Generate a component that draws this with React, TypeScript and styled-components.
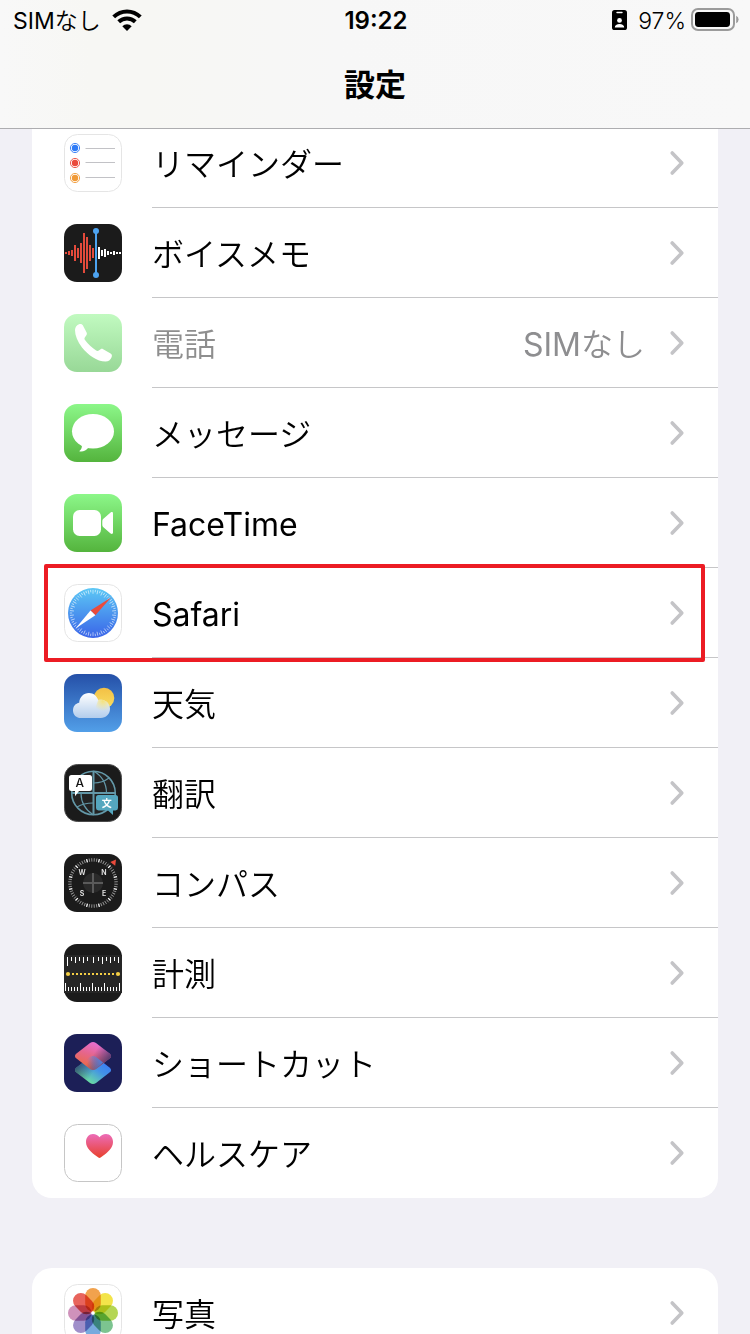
import React from 'react';
import styled, { createGlobalStyle } from 'styled-components';

const GlobalStyle = createGlobalStyle`
  *, *::before, *::after { box-sizing: border-box; }
  body {
    margin: 0;
    background: #f1f0f6;
    color: #000;
    font-family: Inter, "Noto Sans CJK JP", sans-serif;
  }
`;

const Screen = styled.div`
  display: flex;
  flex-direction: column;
  height: 100vh;
  overflow: hidden;
`;

const Header = styled.header`
  position: relative;
  z-index: 1;
  flex: none;
  background: linear-gradient(90deg, #f8f8f8 0%, #f7f7f4 12%, #f7f7f4 20%, #f7f7f7 45%, #f8f8f8 100%);
  border-bottom: 1px solid #adadb0;
`;

const StatusBar = styled.div`
  display: grid;
  grid-template-columns: 1fr auto 1fr;
  align-items: center;
  height: 42px;
  padding: 0 11px 0 13px;
  font-size: 23px;
  line-height: 42px;
`;

const StatusSide = styled.div<{ $end?: boolean }>`
  display: flex;
  align-items: center;
  justify-content: ${(p) => (p.$end ? 'flex-end' : 'flex-start')};
  gap: 11px;
`;

const Carrier = styled.span`
  font-weight: 350;
`;

const Latin = styled.span`
  font-weight: 400;
`;

const Clock = styled.time`
  font-size: 24px;
  font-weight: 600;
`;

const BatteryGroup = styled.div`
  display: flex;
  align-items: center;
  gap: 5px;
  font-weight: 350;
`;

const Title = styled.h1`
  margin: 0;
  height: 86px;
  font-size: 31px;
  font-weight: 700;
  line-height: 86px;
  text-align: center;
`;

const Content = styled.main`
  flex: 1;
  min-height: 0;
  overflow-y: auto;
  scrollbar-width: none;
  padding: 0 32px;
`;

const Groups = styled.div`
  display: flex;
  flex-direction: column;
  gap: 70px;
  margin-top: -11px;
`;

const Group = styled.ul<{ $continued: boolean }>`
  flex: none;
  margin: 0;
  padding: 0;
  list-style: none;
  background: #fff;
  border-radius: ${(p) => (p.$continued ? '0 0 20px 20px' : '20px')};
`;

const Item = styled.li`
  position: relative;
`;

const RowLink = styled.a`
  display: flex;
  align-items: center;
  gap: 30px;
  padding-left: 32px;
  color: inherit;
  text-decoration: none;
`;

const RowBody = styled.span<{ $last: boolean; $dim: boolean }>`
  flex: 1;
  display: flex;
  align-items: center;
  gap: 24px;
  height: 90px;
  padding-right: 33px;
  border-bottom: 1px solid ${(p) => (p.$last ? 'transparent' : '#c6c6c8')};
  color: ${(p) => (p.$dim ? '#8e8e8e' : '#000')};
  font-size: 32px;
  font-weight: 350;
  line-height: 40px;
`;

const Label = styled.span`
  flex: 1;
  padding-top: 4px;
`;

const Value = styled.span`
  padding-top: 4px;
  color: #8e8e90;
`;

const Highlight = styled.div`
  position: absolute;
  z-index: 1;
  inset: -4px 13px -4px 12px;
  border: 4px solid #ec1c24;
  border-radius: 2px;
  pointer-events: none;
`;

const IconSvg = styled.svg`
  flex: none;
  display: block;
  width: 58px;
  height: 58px;
`;

const StatusSvg = styled.svg`
  flex: none;
  display: block;
`;

const Tile = ({ fill, border }: { fill: string; border?: string }) =>
  border ? (
    <rect x="0.5" y="0.5" width="57" height="57" rx="13" fill={fill} stroke={border} />
  ) : (
    <rect width="58" height="58" rx="13" fill={fill} />
  );

const Fade = ({ id, stops }: { id: string; stops: string[] }) => (
  <linearGradient id={id} x1="0" y1="0" x2="0" y2="1">
    {stops.map((c, i) => (
      <stop key={i} offset={i / (stops.length - 1)} stopColor={c} />
    ))}
  </linearGradient>
);

const RemindersIcon = () => (
  <IconSvg viewBox="0 0 58 58" aria-hidden="true">
    <Tile fill="#fff" border="#e5e5e5" />
    {['#2f7bf6', '#ea4b3c', '#f09a37'].map((c, i) => (
      <g key={c}>
        <circle cx="11" cy={14 + i * 15} r="4.6" fill="none" stroke={c} strokeWidth="0.9" />
        <circle cx="11" cy={14 + i * 15} r="3.2" fill={c} />
        <path d={`M21.5 ${[14.5, 28.5, 43.5][i]}H51`} stroke="#c2c2c6" />
      </g>
    ))}
  </IconSvg>
);

const redBars = [2, 4, 6, 16, 10, 20, 40, 32, 16, 10];
const whiteBars = [12, 6, 8, 4, 2, 4, 2, 2];

const VoiceMemosIcon = () => (
  <IconSvg viewBox="0 0 58 58" aria-hidden="true">
    <Tile fill="#1b1b1b" />
    {redBars.map((h, i) => (
      <rect key={i} x={1 + i * 3} y={29 - h / 2} width="2" height={h} fill="#e34a3b" />
    ))}
    {whiteBars.map((h, i) => (
      <rect key={i} x={34 + i * 3} y={29 - h / 2} width="2" height={h} fill="#fff" />
    ))}
    <path d="M32 7V51" stroke="#4da3f0" strokeWidth="2" />
    <circle cx="32" cy="7" r="3" fill="#4da3f0" />
    <circle cx="32" cy="51" r="3" fill="#4da3f0" />
  </IconSvg>
);

const PhoneIcon = () => (
  <IconSvg viewBox="0 0 58 58" aria-hidden="true">
    <defs><Fade id="phone" stops={['#c1fac0', '#98d897']} /></defs>
    <Tile fill="url(#phone)" />
    <path
      fill="#fff"
      d="M11 16C11 13 13 11 15 10.3C16.5 9.7 18 10 18.8 11.2L22.6 18.5C23.2 20 22.8 20.8 22 21.8L20.8 23.5C20.2 24.5 20.5 25.3 21 26C24 30 28 33.8 32.2 36.6C33 37.2 34 37.2 34.8 36.6L36.6 35.2C37.4 34.7 38.3 34.7 39.2 35.2L46.6 39.6C48 40.5 48.2 41.8 47.6 43.2C46.5 46 44.5 47.6 41.5 47.6C33 47.6 24 41 18 33.5C13.5 27.5 11 21.5 11 16Z"
    />
  </IconSvg>
);

const MessagesIcon = () => (
  <IconSvg viewBox="0 0 58 58" aria-hidden="true">
    <defs><Fade id="messages" stops={['#8cf789', '#54b43d']} /></defs>
    <Tile fill="url(#messages)" />
    <ellipse cx="29" cy="27.3" rx="21" ry="17.3" fill="#fff" />
    <path d="M17.5 40C18.6 42.5 17.5 45.5 15.2 47.3C18.6 48.3 22 46.6 24.5 43.5Z" fill="#fff" />
  </IconSvg>
);

const FaceTimeIcon = () => (
  <IconSvg viewBox="0 0 58 58" aria-hidden="true">
    <defs><Fade id="facetime" stops={['#8cf789', '#54b43d']} /></defs>
    <Tile fill="url(#facetime)" />
    <rect x="9" y="16" width="28" height="26" rx="6.5" fill="#fff" />
    <path d="M38.3 27C38.3 26 38.7 25.3 39.4 24.7L46.6 18.5C47.8 17.6 49 18 49 19.4V38.6C49 40 47.8 40.4 46.6 39.5L39.4 33.3C38.7 32.7 38.3 32 38.3 31Z" fill="#fff" />
  </IconSvg>
);

const SafariIcon = () => (
  <IconSvg viewBox="0 0 58 58" aria-hidden="true">
    <defs><Fade id="safari" stops={['#5cc8f5', '#3a64e8']} /></defs>
    <Tile fill="#fff" border="#e5e5e5" />
    <circle cx="29" cy="29" r="25" fill="url(#safari)" />
    {Array.from({ length: 60 }, (_, i) => (
      <path
        key={i}
        d={i % 2 ? 'M29 5.8V8.2' : 'M29 5.8V9.8'}
        stroke="#fff"
        strokeOpacity="0.8"
        strokeWidth="0.7"
        transform={`rotate(${i * 6} 29 29)`}
      />
    ))}
    <path d="M47 13.4L26.5 26.6L31.4 31.2Z" fill="#ea4b3c" />
    <path d="M11.5 44.5L26.5 26.6L31.4 31.2Z" fill="#fff" />
  </IconSvg>
);

const WeatherIcon = () => (
  <IconSvg viewBox="0 0 58 58" aria-hidden="true">
    <defs>
      <Fade id="sky" stops={['#2550a8', '#529fe8']} />
      <Fade id="sun" stops={['#f3bf45', '#f8df62']} />
      <linearGradient id="cloud" gradientUnits="userSpaceOnUse" x1="0" y1="19" x2="0" y2="44">
        <stop offset="0" stopColor="#fff" />
        <stop offset="1" stopColor="#b3cdec" />
      </linearGradient>
      <radialGradient id="glow" gradientUnits="userSpaceOnUse" cx="39" cy="27" r="10">
        <stop offset="0" stopColor="#f4e27c" />
        <stop offset="1" stopColor="#f4e27c" stopOpacity="0" />
      </radialGradient>
    </defs>
    <Tile fill="url(#sky)" />
    <circle cx="40" cy="24" r="10.3" fill="url(#sun)" />
    <path fill="url(#cloud)" d="M17 44C12.3 44 9 40.6 9 36.4C9 32.4 11.7 29.4 15.2 28.8C15.6 23 19.6 19 25 19C29.4 19 32.8 21.8 34.2 26C35.2 25.6 36.3 25.6 37.4 25.8C42.3 26.2 46 30 46 34.8C46 40 42 44 36.8 44Z" />
    <path fill="url(#glow)" d="M34.2 26C35.2 25.6 36.3 25.6 37.4 25.8C42.3 26.2 46 30 46 34.8L40 38H30Z" />
  </IconSvg>
);

const TranslateIcon = () => (
  <IconSvg viewBox="0 0 58 58" aria-hidden="true">
    <Tile fill="#1b1b1b" border="#4a4a4a" />
    <g fill="none" stroke="#6398a8" strokeWidth="1.2">
      <circle cx="29.5" cy="29" r="21.8" fill="#232323" strokeWidth="1.6" />
      <path d="M29.5 7V51M8 29H52" strokeWidth="2" />
      <path d="M29.5 7C38 12 42.5 20 42.5 29M17 29C17 38 21.5 46 29.5 51" />
      <path d="M30 19C36 19 41 17 45 14M13 43C18 40 23 39 29 39" />
    </g>
    <path d="M7.5 11H25.5Q28 11 28 13.5V24.5Q28 27 25.5 27H15L11 32.3V27H7.5Q5 27 5 24.5V13.5Q5 11 7.5 11Z" fill="#fff" />
    <path d="M34.5 31H51.5Q54 31 54 33.5V44Q54 46.4 51.5 46.4H49V51L44 46.4H34.5Q32 46.4 32 44V33.5Q32 31 34.5 31Z" fill="#55a7bf" />
    <text x="15.8" y="23.4" fontSize="12" fontWeight="500" textAnchor="middle" fill="#111">A</text>
    <text x="42.8" y="42.6" fontSize="10" fontWeight="700" textAnchor="middle" fill="#fff">文</text>
  </IconSvg>
);

const CompassIcon = () => (
  <IconSvg viewBox="0 0 58 58" aria-hidden="true">
    <Tile fill="#1b1b1b" />
    {Array.from({ length: 60 }, (_, i) => (
      <path
        key={i}
        d="M29 4.2V7.6"
        stroke={i % 5 === 2 ? '#fff' : '#9a9a9a'}
        strokeWidth={i % 5 === 2 ? 1.3 : 0.9}
        transform={`rotate(${i * 6 + 3} 29 29)`}
      />
    ))}
    <circle cx="29" cy="29" r="10" fill="#2a2a2a" />
    <path d="M29 19V39M19 29H39" stroke="#5a5a5a" strokeWidth="2" />
    <path d="M52 5.5L46.3 8L51.2 11.8Z" fill="#ea4b3c" />
    <g fill="#e8e8e8" fontSize="7" fontWeight="600" textAnchor="middle">
      <text x="18" y="21.3">W</text>
      <text x="40" y="21.3">N</text>
      <text x="18" y="42.3">S</text>
      <text x="40" y="42.3">E</text>
    </g>
  </IconSvg>
);

const topTicks: [number, number][] = [
  [3.5, 9], [7.5, 4], [11.5, 6], [15.5, 4], [19.5, 6], [23.5, 4], [29.5, 6],
  [34.5, 4], [38.5, 7], [42.5, 4], [46.5, 6], [50.5, 4], [54.5, 6],
];

const MeasureIcon = () => (
  <IconSvg viewBox="0 0 58 58" aria-hidden="true">
    <Tile fill="#1b1b1b" />
    <rect y="11" width="58" height="38" fill="#262626" />
    {topTicks.map(([x, h]) => (
      <rect key={x} x={x - 0.5} y="13" width="1" height={h} fill="#fff" />
    ))}
    {Array.from({ length: 19 }, (_, i) => {
      const h = [0, 5, 9, 13, 18].includes(i) ? 8 : 4;
      return <rect key={i} x={1 + i * 3} y={47 - h} width="1" height={h} fill="#fff" />;
    })}
    <path d="M8 30H51" stroke="#f5cf45" strokeWidth="2" strokeDasharray="2 2" />
    <circle cx="4" cy="30" r="2.1" fill="#f5cf45" />
    <circle cx="54" cy="30" r="2.1" fill="#f5cf45" />
  </IconSvg>
);

const diamond = (cy: number) =>
  `M26 ${cy - 13}Q29 ${cy - 15} 32 ${cy - 13}L45.5 ${cy - 2.6}Q48.6 ${cy} 45.5 ${cy + 2.6}L32 ${cy + 13}Q29 ${cy + 15} 26 ${cy + 13}L12.5 ${cy + 2.6}Q9.4 ${cy} 12.5 ${cy - 2.6}Z`;

const ShortcutsIcon = () => (
  <IconSvg viewBox="0 0 58 58" aria-hidden="true">
    <defs>
      <linearGradient id="scBottom" x1="0.9" y1="0.3" x2="0.35" y2="0.9">
        <stop offset="0" stopColor="#3b7ff6" />
        <stop offset="0.4" stopColor="#4393e6" />
        <stop offset="1" stopColor="#69dba4" />
      </linearGradient>
      <linearGradient id="scShade" x1="0" y1="0.35" x2="0.5" y2="0.6">
        <stop offset="0" stopColor="#26315c" stopOpacity="0.8" />
        <stop offset="1" stopColor="#26315c" stopOpacity="0" />
      </linearGradient>
      <linearGradient id="scTop" x1="0.6" y1="0" x2="0.25" y2="0.8">
        <stop offset="0" stopColor="#e86fd6" />
        <stop offset="0.55" stopColor="#e5668c" />
        <stop offset="1" stopColor="#ea6950" />
      </linearGradient>
      <linearGradient id="scTopShade" x1="0.55" y1="0.35" x2="1" y2="0.6">
        <stop offset="0" stopColor="#3f3468" stopOpacity="0" />
        <stop offset="1" stopColor="#3f3468" stopOpacity="0.9" />
      </linearGradient>
      <linearGradient id="scMix" gradientUnits="userSpaceOnUse" x1="24" y1="32" x2="40" y2="28">
        <stop offset="0" stopColor="#4b86e4" stopOpacity="0" />
        <stop offset="1" stopColor="#4b86e4" />
      </linearGradient>
    </defs>
    <Tile fill="#1c1f57" />
    <path d={diamond(36)} fill="url(#scBottom)" />
    <path d={diamond(36)} fill="url(#scShade)" />
    <path d={diamond(22)} fill="url(#scTop)" />
    <path d={diamond(22)} fill="url(#scTopShade)" />
    <path d="M26 23Q29 21 32 23L39 28.4L32 35Q29 37 26 35L19 28.4Z" fill="url(#scMix)" />
  </IconSvg>
);

const HealthIcon = () => (
  <IconSvg viewBox="0 0 58 58" aria-hidden="true">
    <defs><Fade id="heart" stops={['#ec6cb8', '#e8402c']} /></defs>
    <Tile fill="#fff" border="#c6c6c6" />
    <path d="M35.5 34C34.8 34 34 33.4 33 32.6C27.5 28.6 22 24 22 18C22 13.4 25 10 29 10C31.8 10 34.2 11.3 35.5 13.2C36.8 11.3 39.2 10 42 10C46 10 49 13.4 49 18C49 24 43.5 28.6 38 32.6C37 33.4 36.2 34 35.5 34Z" fill="url(#heart)" />
  </IconSvg>
);

const petals = ['#f1a24d', '#f3e44a', '#b5d654', '#7cc490', '#77aade', '#a08fca', '#cf92bb', '#e8645c'];

const Petal = styled.rect`
  mix-blend-mode: multiply;
`;

const PhotosIcon = () => (
  <IconSvg viewBox="0 0 58 58" aria-hidden="true">
    <Tile fill="#fff" border="#e5e5e5" />
    {petals.map((c, i) => (
      <Petal key={c} x="21.2" y="4" width="15.6" height="23.5" rx="7.8" fill={c} transform={`rotate(${i * 45} 29 29)`} />
    ))}
    <circle cx="29" cy="29" r="1.5" fill="#fff" />
  </IconSvg>
);

const WifiIcon = () => (
  <StatusSvg width="30" height="24" viewBox="0 0 30 24" role="img" aria-label="Wi-Fi">
    <g fill="none" stroke="#000" strokeWidth="4">
      <path d="M1.7 7.9A19 19 0 0 1 28.3 7.9" />
      <path d="M6.7 12.8A12 12 0 0 1 23.3 12.8" />
    </g>
    <path d="M15 22L10.3 17.2A6.7 6.7 0 0 1 19.7 17.2Z" />
  </StatusSvg>
);

const BadgeIcon = () => (
  <StatusSvg width="15" height="22" viewBox="0 0 15 22" aria-hidden="true">
    <rect width="15" height="20" rx="2.6" />
    <rect x="4.3" y="1.8" width="6.4" height="1.5" rx="0.7" fill="#fff" />
    <circle cx="7.5" cy="10.4" r="2.4" fill="#fff" />
    <path d="M2.8 17.6C2.8 15 4.8 13.9 7.5 13.9S12.2 15 12.2 17.6Z" fill="#fff" />
  </StatusSvg>
);

const BatteryIcon = () => (
  <StatusSvg width="48" height="26" viewBox="0 0 48 26" aria-hidden="true">
    <rect x="1" y="1" width="42" height="21" rx="6" fill="none" stroke="#9b9b9b" strokeWidth="2" />
    <rect x="4" y="4" width="35" height="15" rx="3.4" />
    <path d="M45.2 7.8Q47.6 8.8 47.6 11.5T45.2 15.2Z" fill="#9b9b9b" />
  </StatusSvg>
);

const Chevron = () => (
  <StatusSvg width="16" height="26" viewBox="0 0 16 26" aria-hidden="true">
    <path d="M3.2 3L12.8 13L3.2 23" fill="none" stroke="#c4c4c7" strokeWidth="3.6" strokeLinecap="round" strokeLinejoin="round" />
  </StatusSvg>
);

const NoSim = () => (
  <>
    <Latin>SIM</Latin>なし
  </>
);

type Entry = {
  label: string;
  Icon: React.ComponentType;
  latin?: boolean;
  noSim?: boolean;
  highlighted?: boolean;
};

const groups: Entry[][] = [
  [
    { label: 'リマインダー', Icon: RemindersIcon },
    { label: 'ボイスメモ', Icon: VoiceMemosIcon },
    { label: '電話', Icon: PhoneIcon, noSim: true },
    { label: 'メッセージ', Icon: MessagesIcon },
    { label: 'FaceTime', Icon: FaceTimeIcon, latin: true },
    { label: 'Safari', Icon: SafariIcon, latin: true, highlighted: true },
    { label: '天気', Icon: WeatherIcon },
    { label: '翻訳', Icon: TranslateIcon },
    { label: 'コンパス', Icon: CompassIcon },
    { label: '計測', Icon: MeasureIcon },
    { label: 'ショートカット', Icon: ShortcutsIcon },
    { label: 'ヘルスケア', Icon: HealthIcon },
  ],
  [{ label: '写真', Icon: PhotosIcon }],
];

export default function App() {
  return (
    <Screen lang="ja">
      <GlobalStyle />
      <Header>
        <StatusBar>
          <StatusSide>
            <Carrier><NoSim /></Carrier>
            <WifiIcon />
          </StatusSide>
          <Clock>19:22</Clock>
          <StatusSide $end>
            <BadgeIcon />
            <BatteryGroup>
              <span>97%</span>
              <BatteryIcon />
            </BatteryGroup>
          </StatusSide>
        </StatusBar>
        <Title>設定</Title>
      </Header>
      <Content>
        <Groups>
          {groups.map((entries, g) => (
            <Group key={g} $continued={g === 0}>
              {entries.map(({ label, Icon, latin, noSim, highlighted }, i) => (
                <Item key={label}>
                  <RowLink href="#" aria-disabled={noSim}>
                    <Icon />
                    <RowBody $last={i === entries.length - 1} $dim={!!noSim}>
                      <Label>{latin ? <Latin>{label}</Latin> : label}</Label>
                      {noSim && <Value><NoSim /></Value>}
                      <Chevron />
                    </RowBody>
                  </RowLink>
                  {highlighted && <Highlight />}
                </Item>
              ))}
            </Group>
          ))}
        </Groups>
      </Content>
    </Screen>
  );
}
